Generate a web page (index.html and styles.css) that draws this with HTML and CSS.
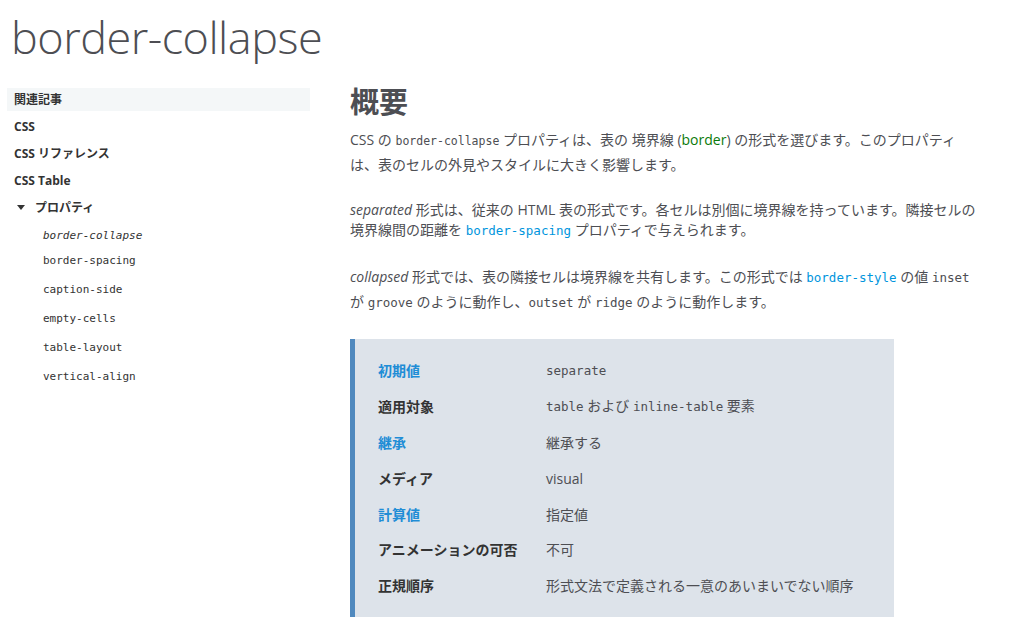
FILE: index.html
```html
<!DOCTYPE html>
<html lang="ja">
<head>
<meta charset="utf-8">
<title>border-collapse</title>
<link rel="stylesheet" href="styles.css">
</head>
<body>
<h1 class="title">border-collapse</h1>
<div class="layout">
  <nav class="sidebar">
    <div class="side-head">関連記事</div>
    <ul class="side-list">
      <li class="side-item">CSS</li>
      <li class="side-item">CSS リファレンス</li>
      <li class="side-item">CSS Table</li>
      <li class="side-item side-open"><span class="tri"></span>プロパティ</li>
    </ul>
    <ul class="sub-list">
      <li class="sub-item sub-current">border-collapse</li>
      <li class="sub-item">border-spacing</li>
      <li class="sub-item">caption-side</li>
      <li class="sub-item">empty-cells</li>
      <li class="sub-item">table-layout</li>
      <li class="sub-item">vertical-align</li>
    </ul>
  </nav>
  <main class="content">
    <h2 class="heading">概要</h2>
    <p class="para para-first">CSS の <code class="code-sm">border-collapse</code> プロパティは、表の 境界線 (<span class="green">border</span>) の形式を選びます。このプロパティは、表のセルの外見やスタイルに大きく影響します。</p>
    <p class="para para-tight"><em>separated</em> 形式は、従来の HTML 表の形式です。各セルは別個に境界線を持っています。隣接セルの境界線間の距離を <code class="code-link">border-spacing</code> プロパティで与えられます。</p>
    <p class="para"><em>collapsed</em> 形式では、表の隣接セルは境界線を共有します。この形式では <code class="code-link">border-style</code> の値 <code class="code">inset</code> が <code class="code">groove</code> のように動作し、<code class="code">outset</code> が <code class="code">ridge</code> のように動作します。</p>
    <div class="props">
      <div class="prow"><div class="plabel link">初期値</div><div class="pval"><code class="code">separate</code></div></div>
      <div class="prow"><div class="plabel">適用対象</div><div class="pval"><code class="code">table</code> および <code class="code">inline-table</code> 要素</div></div>
      <div class="prow"><div class="plabel link">継承</div><div class="pval">継承する</div></div>
      <div class="prow"><div class="plabel">メディア</div><div class="pval">visual</div></div>
      <div class="prow"><div class="plabel link">計算値</div><div class="pval">指定値</div></div>
      <div class="prow"><div class="plabel">アニメーションの可否</div><div class="pval">不可</div></div>
      <div class="prow"><div class="plabel">正規順序</div><div class="pval">形式文法で定義される一意のあいまいでない順序</div></div>
    </div>
  </main>
</div>
</body>
</html>
```

FILE: styles.css
```css
* { box-sizing: border-box; }
body {
  margin: 0;
  font-family: "Open Sans", "Noto Sans CJK JP", sans-serif;
  color: #4d4e53;
  background: #fff;
}
.title {
  margin: 0;
  padding: 5px 0 0 11px;
  font-weight: 300;
  font-size: 45px;
  line-height: 64px;
  letter-spacing: -0.5px;
  color: #4d4e53;
}
.layout {
  display: grid;
  grid-template-columns: 303px 630px;
  column-gap: 40px;
  padding-left: 7px;
  margin-top: 19px;
}
.sidebar {
  font-size: 12px;
  font-weight: 700;
  color: #333;
}
.side-head {
  background: #f4f7f8;
  height: 23px;
  line-height: 23px;
  padding-left: 7px;
  font-size: 12px;
}
.side-list, .sub-list {
  list-style: none;
  margin: 0;
  padding: 0;
}
.side-item {
  padding-left: 7px;
  height: 27px;
  line-height: 32px;
}
.side-open {
  display: flex;
  align-items: center;
  padding-top: 4px;
}
.tri {
  width: 0;
  height: 0;
  border-left: 4px solid transparent;
  border-right: 4px solid transparent;
  border-top: 5px solid #333;
  margin: 0 10px 0 3px;
}
.sub-list {
  padding-left: 36px;
  padding-top: 6px;
}
.sub-item {
  font-family: "DejaVu Sans Mono", monospace;
  font-weight: 400;
  font-size: 11px;
  height: 29px;
  line-height: 29px;
  color: #333;
}
.sub-current {
  font-style: italic;
  height: 21px;
  line-height: 21px;
}
.content {
  font-size: 14px;
  line-height: 24px;
  margin-top: -4px;
}
.heading {
  margin: 0 0 8px;
  font-size: 29px;
  line-height: 36px;
  font-weight: 700;
  color: #4d4e53;
}
.para {
  margin: 0;
}
.para-first { margin-bottom: 23px; }
.para-tight {
  line-height: 20px;
  margin-bottom: 24px;
}
.para em { font-style: italic; }
.green { color: #0a7a0a; }
code, .code {
  font-family: "DejaVu Sans Mono", monospace;
  font-size: 12.5px;
  color: #4d4e53;
}
.code-sm {
  font-family: "DejaVu Sans Mono", monospace;
  font-size: 11.5px;
}
.code-link {
  font-family: "DejaVu Sans Mono", monospace;
  font-size: 12.5px;
  color: #0095dd;
}
.props {
  margin-top: 24px;
  width: 544px;
  background: #dde3ea;
  border-left: 5px solid #5089be;
  padding: 14px 0 13px 23px;
  font-size: 14px;
}
.prow {
  display: grid;
  grid-template-columns: 168px 1fr;
  height: 35.9px;
  align-items: center;
}
.plabel {
  font-weight: 700;
  color: #333;
}
.plabel.link { color: #1f8dd6; }
.pval { color: #4d4e53; }
.pval .code { font-size: 12.5px; }
```
